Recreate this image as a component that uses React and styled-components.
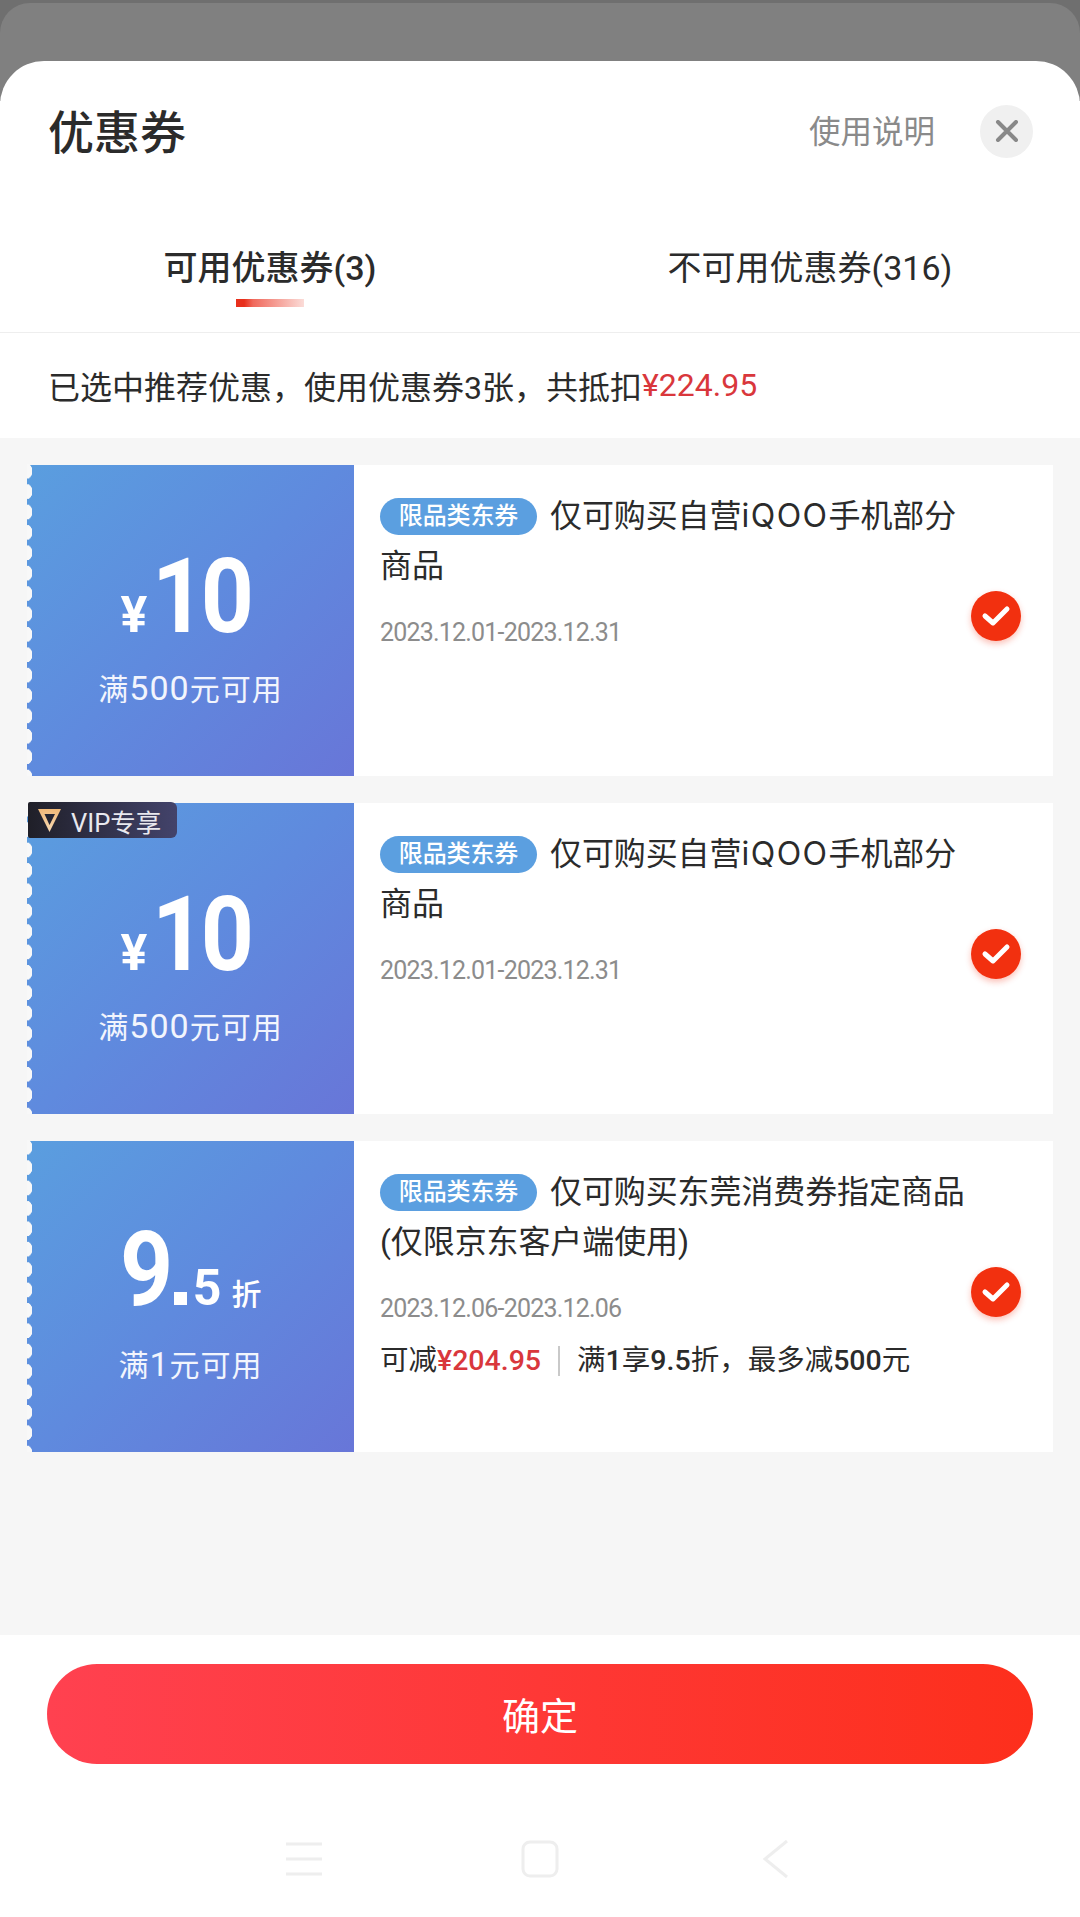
import React from 'react';
import styled, { createGlobalStyle } from 'styled-components';

const GlobalStyle = createGlobalStyle`
  html, body {
    margin: 0;
    padding: 0;
    background: #fff;
    font-family: Roboto, "Noto Sans CJK SC", sans-serif;
  }
  * { box-sizing: border-box; }
`;

function Coupon({ coupon }) {
  return (
    <Card>
      <Face>
        {coupon.vip && (
          <VipBadge>
            <svg width="25" height="25" viewBox="0 0 25 25">
              <defs>
                <linearGradient id="vipMark" x1="0" y1="0" x2="0" y2="1">
                  <stop offset="0" stopColor="#f0b878" />
                  <stop offset="1" stopColor="#f6d9b4" />
                </linearGradient>
              </defs>
              <path d="M1 1h23L12.5 24z M7.5 6H18L12.5 17z" fill="url(#vipMark)" fillRule="evenodd" />
            </svg>
            VIP专享
          </VipBadge>
        )}
        {coupon.discount ? (
          <Amount $lift>
            <BigNum>9</BigNum>
            <Dot />
            <MidNum>5</MidNum>
            <Unit>折</Unit>
          </Amount>
        ) : (
          <Amount>
            <Yen>¥</Yen>
            <BigNum>{coupon.amount}</BigNum>
          </Amount>
        )}
        <Limit>满<LimitNum>{coupon.min}</LimitNum>元可用</Limit>
      </Face>
      <Body>
        <Info>
          <Title>
            <Tag>限品类东券</Tag>
            {coupon.title}
          </Title>
          <DateText>{coupon.date}</DateText>
          {coupon.save && (
            <Detail>
              可减<Save>{coupon.save}</Save>
              <Sep />
              <span>满<Num>1</Num>享<Num>9.5</Num>折，最多减<Num>500</Num>元</span>
            </Detail>
          )}
        </Info>
        <Check>
          <svg width="30" height="24" viewBox="0 0 30 24">
            <path d="M4 12l8 7L26 5" fill="none" stroke="#fff" strokeWidth="5" strokeLinecap="round" strokeLinejoin="round" />
          </svg>
        </Check>
      </Body>
    </Card>
  );
}

export default function App() {
  return (
    <Page>
      <GlobalStyle />
      <Backdrop>
        <BackdropInner />
      </Backdrop>
      <Sheet>
        <Header>
          <Heading>优惠券</Heading>
          <HeaderRight>
            <Help>使用说明</Help>
            <Close>
              <svg width="24" height="22" viewBox="0 0 24 22">
                <path d="M3 2l18 18M21 2L3 20" stroke="#888" strokeWidth="4" strokeLinecap="round" />
              </svg>
            </Close>
          </HeaderRight>
        </Header>
        <Tabs>
          <Tab $active>
            可用优惠券(3)
            <TabLine />
          </Tab>
          <Tab>不可用优惠券(316)</Tab>
        </Tabs>
        <Summary>
          已选中推荐优惠，使用优惠券3张，共抵扣<Price>¥224.95</Price>
        </Summary>
        <List>
          {coupons.map(c => <Coupon key={c.id} coupon={c} />)}
        </List>
        <Footer>
          <Confirm>确定</Confirm>
          <NavBar>
            <svg width="38" height="36" viewBox="0 0 38 36">
              <path d="M1 3h36M1 18h36M1 33h36" stroke="#eeeeee" strokeWidth="3" />
            </svg>
            <svg width="38" height="38" viewBox="0 0 38 38">
              <rect x="2" y="2" width="34" height="34" rx="7" fill="none" stroke="#eeeeee" strokeWidth="3" />
            </svg>
            <svg width="38" height="38" viewBox="0 0 38 38">
              <path d="M30 1L8 19l22 18" fill="none" stroke="#eeeeee" strokeWidth="3" />
            </svg>
          </NavBar>
        </Footer>
      </Sheet>
    </Page>
  );
}

const Page = styled.div`
  width: 1080px;
  height: 1917px;
  display: flex;
  flex-direction: column;
  overflow: hidden;
  background: #fff;
`;
const Backdrop = styled.div`
  height: 101px;
  margin-bottom: -40px;
  padding-top: 3px;
  background: #6f6f6f;
  flex: none;
`;
const BackdropInner = styled.div`
  height: 100%;
  background: #808080;
  border-radius: 30px 30px 0 0;
`;
const Sheet = styled.div`
  position: relative;
  flex: 1;
  display: flex;
  flex-direction: column;
  background: #fff;
  border-radius: 44px 44px 0 0;
  overflow: hidden;
`;
const Header = styled.div`
  height: 140px;
  flex: none;
  display: flex;
  align-items: center;
  justify-content: space-between;
  padding: 0 47px 0 48px;
`;
const Heading = styled.div`
  margin-bottom: 4px;
  font-size: 46px;
  font-weight: 500;
  color: #2b2b2b;
`;
const HeaderRight = styled.div`
  display: flex;
  align-items: center;
  gap: 45px;
`;
const Help = styled.div`
  margin-bottom: 4px;
  font-size: 31.5px;
  color: #8a8a8a;
`;
const Close = styled.div`
  width: 53px;
  height: 53px;
  border-radius: 50%;
  background: #f0f0f0;
  display: flex;
  align-items: center;
  justify-content: center;
`;
const Tabs = styled.div`
  height: 132px;
  flex: none;
  display: flex;
  border-bottom: 1px solid #eeeeee;
`;
const Tab = styled.div`
  width: 50%;
  display: flex;
  flex-direction: column;
  align-items: center;
  padding-top: 44px;
  font-size: 34px;
  line-height: 46px;
  font-weight: ${p => (p.$active ? 500 : 400)};
  color: #2b2b2b;
`;
const TabLine = styled.div`
  width: 68px;
  height: 8px;
  margin-top: 8px;
  background: linear-gradient(90deg, #e8301c 0%, #e8301c 12%, #f0695c 25%, #fbdcd8 100%);
`;
const Summary = styled.div`
  height: 105px;
  flex: none;
  display: flex;
  align-items: center;
  padding: 0 0 2px 48px;
  font-size: 32px;
  color: #2b2b2b;
`;
const Price = styled.span`
  color: #d9373c;
`;
const List = styled.div`
  flex: 1;
  display: flex;
  flex-direction: column;
  gap: 27px;
  padding: 27px;
  background: #f6f6f6;
`;
const Card = styled.div`
  height: 311px;
  flex: none;
  display: flex;
  background: #fff;
`;
const Face = styled.div`
  position: relative;
  width: 327px;
  flex: none;
  display: flex;
  flex-direction: column;
  align-items: center;
  padding-top: 88px;
  color: #fff;
  background: linear-gradient(135deg, #5a9edf 0%, #5f8ade 50%, #6876d8 100%);
  &::before {
    content: '';
    position: absolute;
    left: 0;
    top: -4px;
    bottom: 0;
    width: 7px;
    background: radial-gradient(ellipse 5.5px 7.8px at 0 50%, #f8f8f8 94%, transparent 100%) 0 0 / 7px 20.4px repeat-y;
  }
`;
const VipBadge = styled.div`
  position: absolute;
  z-index: 1;
  left: 1px;
  top: -1px;
  width: 149px;
  height: 36px;
  display: flex;
  align-items: center;
  gap: 9px;
  padding-left: 9px;
  font-size: 25.5px;
  color: #e8e8ee;
  background: linear-gradient(90deg, #1f1f28, #43436b);
  border-radius: 2px 6px 6px 2px;
`;
const Amount = styled.div`
  height: 88px;
  display: flex;
  align-items: baseline;
  font-weight: 700;
  margin: ${p => (p.$lift ? '-3px 0 3px' : '0')};
`;
const Yen = styled.span`
  font-size: 50px;
  margin-right: 5px;
`;
const BigNum = styled.span`
  display: inline-block;
  font-size: 103px;
  line-height: 88px;
  letter-spacing: -5px;
  transform: scaleX(0.9);
  transform-origin: 0 50%;
`;
const Dot = styled.span`
  width: 13px;
  height: 13px;
  margin: 0 6px 0 0;
  background: #fff;
`;
const MidNum = styled.span`
  font-size: 50px;
`;
const Unit = styled.span`
  font-size: 30px;
  font-weight: 500;
  margin-left: 10px;
`;
const Limit = styled.div`
  margin-top: 25px;
  font-size: 30px;
  line-height: 44px;
  letter-spacing: 1px;
  color: #f2f5fd;
`;
const LimitNum = styled.span`
  font-size: 34px;
`;
const Body = styled.div`
  flex: 1;
  display: flex;
  padding: 26px 33px 0 26px;
`;
const Info = styled.div`
  width: 590px;
  flex: none;
`;
const Title = styled.div`
  font-size: 32px;
  line-height: 50px;
  letter-spacing: -0.1px;
  color: #2b2b2b;
`;
const Latin = styled.span`
  font-family: Inter, sans-serif;
  letter-spacing: 1.5px;
`;
const Tag = styled.span`
  display: inline-flex;
  align-items: center;
  justify-content: center;
  width: 157px;
  height: 37px;
  margin-right: 13px;
  vertical-align: 3px;
  border-radius: 19px;
  background: #5b9fe0;
  color: #fff;
  font-size: 24px;
  font-weight: 500;
`;
const DateText = styled.div`
  margin-top: 25px;
  font-size: 25px;
  line-height: 34px;
  letter-spacing: -0.8px;
  color: #8c8c8c;
`;
const Detail = styled.div`
  display: flex;
  align-items: center;
  margin-top: 18px;
  font-size: 28.5px;
  line-height: 34px;
  color: #2b2b2b;
`;
const Num = styled.span`
  font-weight: 500;
`;
const Save = styled.span`
  color: #d9373c;
  font-weight: 500;
`;
const Sep = styled.span`
  width: 2px;
  height: 30px;
  margin: 0 17px;
  background: #c9c9c9;
`;
const Check = styled.div`
  align-self: center;
  width: 50px;
  height: 50px;
  margin: 0 0 36px 1px;
  flex: none;
  display: flex;
  align-items: center;
  justify-content: center;
  border-radius: 50%;
  background: #f2300f;
  box-shadow: 0 3px 6px rgba(242, 48, 15, 0.3);
`;
const Footer = styled.div`
  height: 282px;
  flex: none;
  display: flex;
  flex-direction: column;
  padding: 29px 47px 0;
  background: #fff;
`;
const Confirm = styled.div`
  height: 100px;
  flex: none;
  display: flex;
  align-items: center;
  justify-content: center;
  padding-bottom: 2px;
  border-radius: 50px;
  font-size: 38px;
  color: #fff;
  background: linear-gradient(90deg, #ff4150 0%, #fd2f1c 100%);
`;
const NavBar = styled.div`
  display: flex;
  justify-content: center;
  align-items: center;
  gap: 198px;
  margin-top: 76px;
`;

const coupons = [
  {
    id: 1,
    amount: '10',
    min: '500',
    title: <>仅可购买自营<Latin>iQOO</Latin>手机部分商品</>,
    date: '2023.12.01-2023.12.31',
  },
  {
    id: 2,
    vip: true,
    amount: '10',
    min: '500',
    title: <>仅可购买自营<Latin>iQOO</Latin>手机部分商品</>,
    date: '2023.12.01-2023.12.31',
  },
  {
    id: 3,
    discount: true,
    min: '1',
    title: '仅可购买东莞消费券指定商品(仅限京东客户端使用)',
    date: '2023.12.06-2023.12.06',
    save: '¥204.95',
  },
];
